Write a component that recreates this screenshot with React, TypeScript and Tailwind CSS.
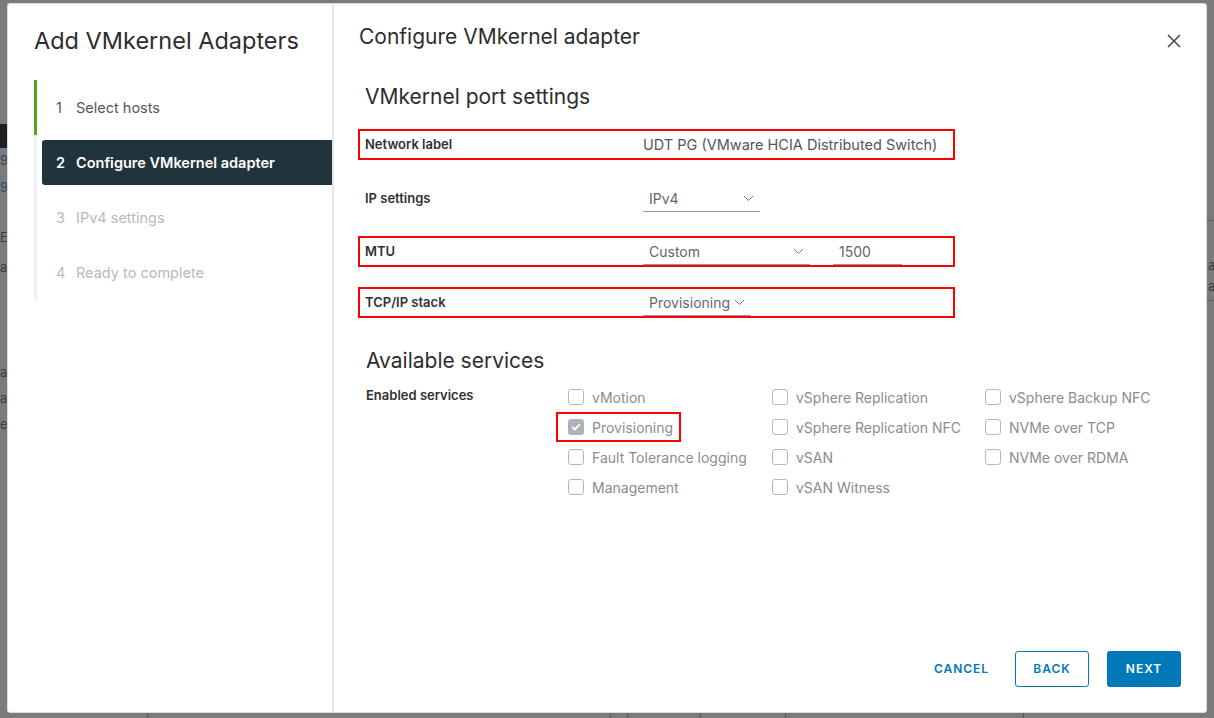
import React from "react";

const font = { fontFamily: "Inter, 'Noto Sans', sans-serif" };

function Chevron() {
  return (
    <svg width="11" height="7" viewBox="0 0 11 7" className="shrink-0">
      <polyline points="1,1 5.5,5.5 10,1" fill="none" stroke="#7a7a7a" strokeWidth="1" />
    </svg>
  );
}

function Select({ value, width }: { value: string; width: string }) {
  return (
    <div className={`flex items-center justify-between h-[26px] border-b border-[#9a9a9a] pl-[6px] pr-[6px] ${width}`}>
      <span className="text-[14px] text-[#666]">{value}</span>
      <Chevron />
    </div>
  );
}

function Row({
  label,
  highlight,
  className = "",
  children,
}: {
  label: string;
  highlight?: boolean;
  className?: string;
  children: React.ReactNode;
}) {
  return (
    <div
      className={`flex items-center h-[31px] w-[597px] pl-[5px] border-2 ${
        highlight ? "border-[#ff0000]" : "border-transparent"
      } ${className}`}
    >
      <div className="w-[278px] text-[13px] font-semibold text-[#313131]">{label}</div>
      {children}
    </div>
  );
}

function Checkbox({ label, checked }: { label: string; checked?: boolean }) {
  return (
    <div className="flex items-center h-[30px] gap-[8px]">
      {checked ? (
        <div className="w-[16px] h-[16px] rounded-[3px] bg-[#adb4b9] flex items-center justify-center">
          <svg width="10" height="8" viewBox="0 0 10 8">
            <polyline points="1.2,4 3.8,6.4 8.8,1.3" fill="none" stroke="#fff" strokeWidth="1.8" />
          </svg>
        </div>
      ) : (
        <div className="w-[16px] h-[16px] rounded-[3px] border border-[#b8b8b8] bg-white" />
      )}
      <span className="text-[14px] text-[#8c8c8c]">{label}</span>
    </div>
  );
}

const steps = [
  { n: "1", label: "Select hosts", state: "done" },
  { n: "2", label: "Configure VMkernel adapter", state: "current" },
  { n: "3", label: "IPv4 settings", state: "todo" },
  { n: "4", label: "Ready to complete", state: "todo" },
];

const serviceCols = [
  ["vMotion", "Provisioning", "Fault Tolerance logging", "Management"],
  ["vSphere Replication", "vSphere Replication NFC", "vSAN", "vSAN Witness"],
  ["vSphere Backup NFC", "NVMe over TCP", "NVMe over RDMA"],
];

export default function App() {
  return (
    <div className="relative w-[1214px] h-[718px] bg-[#7b7b7b] overflow-hidden" style={font}>
      {/* dimmed client page behind the wizard */}
      <div className="absolute inset-0 text-[13px] text-[#3d3d3d]">
        <div className="absolute left-0 top-[124px] w-[10px] h-[24px] bg-[#1c2023]" />
        <div className="absolute left-0 top-[151px] text-[#2a4a63]">95</div>
        <div className="absolute left-0 top-[178px] text-[#2a4a63]">95</div>
        <div className="absolute left-0 top-[228px]">E_</div>
        <div className="absolute left-0 top-[258px]">ab</div>
        <div className="absolute left-0 top-[363px]">a!</div>
        <div className="absolute left-0 top-[389px]">a!</div>
        <div className="absolute left-0 top-[415px]">e4</div>
        <div className="absolute left-[1207px] top-[220px] w-[10px] h-px bg-[#5e5e5e]" />
        <div className="absolute left-[1207px] top-[300px] w-[10px] h-px bg-[#5e5e5e]" />
        <div className="absolute left-[1208px] top-[256px]">a</div>
        <div className="absolute left-[1208px] top-[277px]">a</div>
        <div className="absolute left-[147px] top-[713px] w-px h-[5px] bg-[#5e5e5e]" />
        <div className="absolute left-[610px] top-[713px] w-px h-[5px] bg-[#5e5e5e]" />
        <div className="absolute left-[627px] top-[713px] w-px h-[5px] bg-[#5e5e5e]" />
        <div className="absolute left-[700px] top-[713px] w-px h-[5px] bg-[#5e5e5e]" />
        <div className="absolute left-[785px] top-[713px] w-px h-[5px] bg-[#5e5e5e]" />
        <div className="absolute left-[1023px] top-[713px] w-px h-[5px] bg-[#5e5e5e]" />
      </div>

      <div className="relative pl-[7px] pt-[3px]">
        <div className="flex w-[1200px] h-[710px] bg-white rounded-[3px] border border-[#d8dde1] overflow-hidden">
          {/* wizard steps */}
          <div className="w-[326px] shrink-0 border-r-2 border-[#e4e8eb] pt-[22px]">
            <h1 className="pl-[26px] text-[23.5px] leading-[30px] text-[#2d2d2d]">Add VMkernel Adapters</h1>
            <div className="mt-[24px] ml-[26px] flex flex-col">
              {steps.map((s) => (
                <div key={s.n} className="flex">
                  <div
                    className={`w-[3px] ${
                      s.state === "done" ? "bg-[#5aa220]" : "bg-[#eef2f4]"
                    }`}
                  />
                  <div className="flex-1 py-[5px] pl-[5px]">
                    <div
                      className={`flex items-center h-[45px] pl-[14px] gap-[11px] text-[14.5px] rounded-l-[3px] ${
                        s.state === "current"
                          ? "bg-[#21333b] text-white font-semibold"
                          : s.state === "done"
                          ? "text-[#565656]"
                          : "text-[#b9b9b9]"
                      }`}
                    >
                      <span className="w-[9px]">{s.n}</span>
                      <span>{s.label}</span>
                    </div>
                  </div>
                </div>
              ))}
            </div>
          </div>

          {/* step content */}
          <div className="flex-1 min-w-0 flex flex-col pl-[24px] pr-[25px]">
            <div className="flex items-center justify-between pt-[20px]">
              <h2 className="pl-[1px] text-[21px] leading-[26px] text-[#2d2d2d]">Configure VMkernel adapter</h2>
              <svg width="14" height="14" viewBox="0 0 14 14" className="mt-[8px]">
                <path d="M1 1 L13 13 M13 1 L1 13" stroke="#454545" strokeWidth="1.5" />
              </svg>
            </div>

            <h3 className="mt-[34px] pl-[7px] text-[21px] leading-[26px] text-[#2d2d2d]">VMkernel port settings</h3>

            <div className="mt-[19px] flex flex-col">
              <Row label="Network label" highlight>
                <span className="text-[14.5px] text-[#565656]">UDT PG (VMware HCIA Distributed Switch)</span>
              </Row>
              <Row label="IP settings" className="mt-[23px]">
                <Select value="IPv4" width="w-[117px]" />
              </Row>
              <Row label="MTU" highlight className="mt-[22px]">
                <Select value="Custom" width="w-[167px]" />
                <div className="ml-[23px] w-[69px] h-[26px] border-b border-[#9a9a9a] pl-[6px] flex items-center text-[14px] text-[#666]">
                  1500
                </div>
              </Row>
              <Row label="TCP/IP stack" highlight className="mt-[20px]">
                <Select value="Provisioning" width="w-[108px]" />
              </Row>
            </div>

            <h3 className="mt-[30px] pl-[8px] text-[21px] leading-[26px] text-[#2d2d2d]">Available services</h3>

            <div className="mt-[10px] flex pl-[8px]">
              <div className="w-[202px] shrink-0 text-[13px] font-semibold text-[#313131] pt-[2px]">Enabled services</div>
              {serviceCols.map((col, i) => (
                <div key={i} className={`flex flex-col -mt-[2px] shrink-0 ${i === 0 ? "w-[204px]" : i === 1 ? "w-[213px]" : "w-[180px]"}`}>
                  {col.map((label) =>
                    label === "Provisioning" ? (
                      <div key={label} className="-ml-[12px] w-[125px] h-[30px] border-2 border-[#ff0000] pl-[10px] flex items-center">
                        <Checkbox label={label} checked />
                      </div>
                    ) : (
                      <Checkbox key={label} label={label} />
                    )
                  )}
                </div>
              ))}
            </div>

            <div className="mt-auto mb-[25px] flex items-center justify-end gap-[18px]">
              <button className="px-[8px] h-[36px] text-[12px] font-semibold tracking-[0.08em] text-[#0079b8]">CANCEL</button>
              <button className="w-[74px] h-[36px] rounded-[3px] border border-[#0079b8] text-[12px] font-semibold tracking-[0.08em] text-[#0079b8]">
                BACK
              </button>
              <button className="w-[74px] h-[36px] rounded-[3px] bg-[#0079b8] text-[12px] font-semibold tracking-[0.08em] text-white">
                NEXT
              </button>
            </div>
          </div>
        </div>
      </div>
    </div>
  );
}
